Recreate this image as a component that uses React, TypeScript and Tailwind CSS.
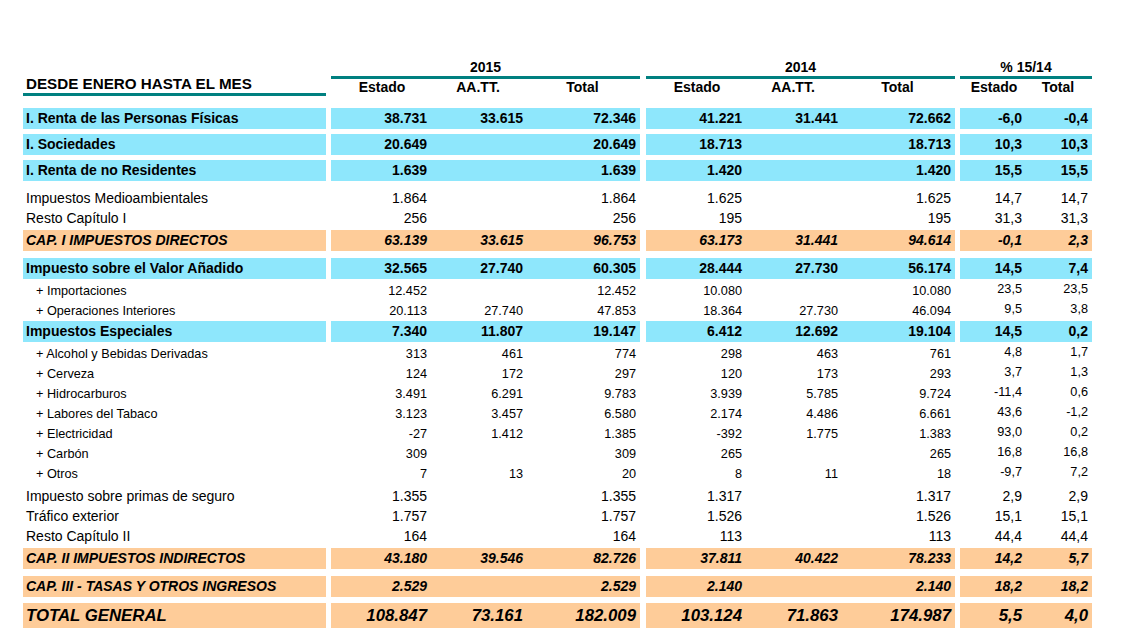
type Kind = "blue" | "peach" | "plain" | "sub" | "total";

type Line = {
  label: string;
  v: string[];
  kind: Kind;
  mt: string;
};

const lines: Line[] = [
  { label: "I. Renta de las Personas Físicas", v: ["38.731", "33.615", "72.346", "41.221", "31.441", "72.662", "-6,0", "-0,4"], kind: "blue", mt: "mt-[12px]" },
  { label: "I. Sociedades", v: ["20.649", "", "20.649", "18.713", "", "18.713", "10,3", "10,3"], kind: "blue", mt: "mt-[5px]" },
  { label: "I. Renta de no Residentes", v: ["1.639", "", "1.639", "1.420", "", "1.420", "15,5", "15,5"], kind: "blue", mt: "mt-[5px]" },
  { label: "Impuestos Medioambientales", v: ["1.864", "", "1.864", "1.625", "", "1.625", "14,7", "14,7"], kind: "plain", mt: "mt-[7px]" },
  { label: "Resto Capítulo I", v: ["256", "", "256", "195", "", "195", "31,3", "31,3"], kind: "plain", mt: "mt-0" },
  { label: "CAP. I IMPUESTOS DIRECTOS", v: ["63.139", "33.615", "96.753", "63.173", "31.441", "94.614", "-0,1", "2,3"], kind: "peach", mt: "mt-[2px]" },
  { label: "Impuesto sobre el Valor Añadido", v: ["32.565", "27.740", "60.305", "28.444", "27.730", "56.174", "14,5", "7,4"], kind: "blue", mt: "mt-[7px]" },
  { label: "+ Importaciones", v: ["12.452", "", "12.452", "10.080", "", "10.080", "23,5", "23,5"], kind: "sub", mt: "mt-[1px]" },
  { label: "+ Operaciones Interiores", v: ["20.113", "27.740", "47.853", "18.364", "27.730", "46.094", "9,5", "3,8"], kind: "sub", mt: "mt-0" },
  { label: "Impuestos Especiales", v: ["7.340", "11.807", "19.147", "6.412", "12.692", "19.104", "14,5", "0,2"], kind: "blue", mt: "mt-[1px]" },
  { label: "+ Alcohol y Bebidas Derivadas", v: ["313", "461", "774", "298", "463", "761", "4,8", "1,7"], kind: "sub", mt: "mt-[1px]" },
  { label: "+ Cerveza", v: ["124", "172", "297", "120", "173", "293", "3,7", "1,3"], kind: "sub", mt: "mt-0" },
  { label: "+ Hidrocarburos", v: ["3.491", "6.291", "9.783", "3.939", "5.785", "9.724", "-11,4", "0,6"], kind: "sub", mt: "mt-0" },
  { label: "+ Labores del Tabaco", v: ["3.123", "3.457", "6.580", "2.174", "4.486", "6.661", "43,6", "-1,2"], kind: "sub", mt: "mt-0" },
  { label: "+ Electricidad", v: ["-27", "1.412", "1.385", "-392", "1.775", "1.383", "93,0", "0,2"], kind: "sub", mt: "mt-0" },
  { label: "+ Carbón", v: ["309", "", "309", "265", "", "265", "16,8", "16,8"], kind: "sub", mt: "mt-0" },
  { label: "+ Otros", v: ["7", "13", "20", "8", "11", "18", "-9,7", "7,2"], kind: "sub", mt: "mt-0" },
  { label: "Impuesto sobre primas de seguro", v: ["1.355", "", "1.355", "1.317", "", "1.317", "2,9", "2,9"], kind: "plain", mt: "mt-[3px]" },
  { label: "Tráfico exterior", v: ["1.757", "", "1.757", "1.526", "", "1.526", "15,1", "15,1"], kind: "plain", mt: "mt-0" },
  { label: "Resto Capítulo II", v: ["164", "", "164", "113", "", "113", "44,4", "44,4"], kind: "plain", mt: "mt-0" },
  { label: "CAP. II IMPUESTOS INDIRECTOS", v: ["43.180", "39.546", "82.726", "37.811", "40.422", "78.233", "14,2", "5,7"], kind: "peach", mt: "mt-[2px]" },
  { label: "CAP. III - TASAS Y OTROS INGRESOS", v: ["2.529", "", "2.529", "2.140", "", "2.140", "18,2", "18,2"], kind: "peach", mt: "mt-[7px]" },
  { label: "TOTAL GENERAL", v: ["108.847", "73.161", "182.009", "103.124", "71.863", "174.987", "5,5", "4,0"], kind: "total", mt: "mt-[6px]" },
];

const rowStyle: Record<Kind, { bg: string; text: string; h: string }> = {
  blue: { bg: "bg-[#8ee7fc]", text: "text-[14px] font-bold leading-[21px]", h: "h-[21px]" },
  peach: { bg: "bg-[#fecc99]", text: "text-[14px] font-bold italic leading-[21px]", h: "h-[21px]" },
  total: { bg: "bg-[#fecc99]", text: "text-[16.8px] font-bold italic leading-[25px]", h: "h-[25px]" },
  plain: { bg: "", text: "text-[14px] leading-[20px]", h: "h-[20px]" },
  sub: { bg: "", text: "text-[12.7px] leading-[20px]", h: "h-[20px]" },
};

function Row({ line }: { line: Line }) {
  const s = rowStyle[line.kind];
  const v = line.v;
  const isSub = line.kind === "sub";
  const cell = isSub ? "pt-[1px]" : "";
  return (
    <div className={`flex ${line.mt} ${s.h} ${s.text}`}>
      <div className={`w-[303px] ${s.bg} ${isSub ? "pl-[13px]" : "pl-[3px]"} ${cell} whitespace-nowrap`}>
        {line.label}
      </div>
      <div className={`ml-[5px] w-[309px] ${s.bg} ${cell} grid grid-cols-[96px_96px_1fr] pr-1 text-right`}>
        <div>{v[0]}</div>
        <div>{v[1]}</div>
        <div>{v[2]}</div>
      </div>
      <div className={`ml-[6px] w-[309px] ${s.bg} ${cell} grid grid-cols-[96px_96px_1fr] pr-1 text-right`}>
        <div>{v[3]}</div>
        <div>{v[4]}</div>
        <div>{v[5]}</div>
      </div>
      <div className={`ml-[5px] w-[132px] ${s.bg} ${isSub ? "-mt-[1px]" : ""} grid grid-cols-[62px_1fr] pr-1 text-right`}>
        <div>{v[6]}</div>
        <div>{v[7]}</div>
      </div>
    </div>
  );
}

function GroupHead({ title, cols, width }: { title: string; cols: string[]; width: string }) {
  const grid = cols.length === 3 ? "grid-cols-[96px_96px_1fr] pr-1" : "grid-cols-[62px_1fr] pr-1";
  return (
    <div className={width}>
      <div className="h-[18px] leading-[18px] text-center border-b-[3px] border-[#008080] box-content">{title}</div>
      <div className={`grid ${grid} leading-[16px]`}>
        {cols.map((c) => (
          <div key={c} className="pl-[6px] text-center">
            {c}
          </div>
        ))}
      </div>
    </div>
  );
}

export default function App() {
  return (
    <div
      className="min-h-screen w-[1128px] bg-white text-black pt-[58px] pl-[23px]"
      style={{ fontFamily: '"Liberation Sans", Arial, sans-serif' }}
    >
      {/* Header */}
      <div className="flex h-[38px] font-bold text-[14px]">
        <div className="w-[303px] mt-[17px]">
          <div className="h-[18px] leading-[18px] pl-[3px] text-[15.2px] border-b-[3px] border-[#008080] box-content whitespace-nowrap">
            DESDE ENERO HASTA EL MES
          </div>
        </div>
        <div className="ml-[5px]">
          <GroupHead title="2015" cols={["Estado", "AA.TT.", "Total"]} width="w-[309px]" />
        </div>
        <div className="ml-[6px]">
          <GroupHead title="2014" cols={["Estado", "AA.TT.", "Total"]} width="w-[309px]" />
        </div>
        <div className="ml-[5px]">
          <GroupHead title="% 15/14" cols={["Estado", "Total"]} width="w-[132px]" />
        </div>
      </div>

      {/* Rows */}
      {lines.map((l) => (
        <Row key={l.label} line={l} />
      ))}
    </div>
  );
}
